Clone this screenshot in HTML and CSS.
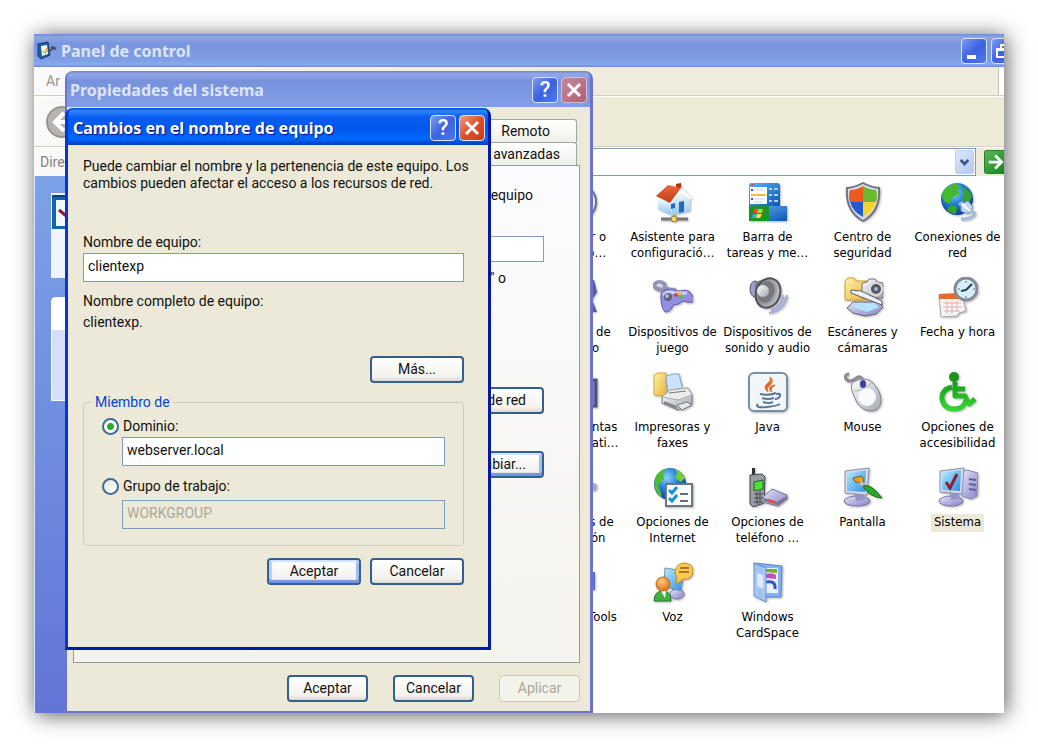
FILE: index.html
```html
<!DOCTYPE html>
<html lang="es">
<head>
<meta charset="utf-8">
<title>Panel de control</title>
<link rel="stylesheet" href="styles.css">
</head>
<body>
<svg class="defs" width="0" height="0" aria-hidden="true">
  <defs>
    <linearGradient id="screenBlue" x1="0" y1="0" x2="1" y2="1"><stop offset="0" stop-color="#b9ecff"/><stop offset="1" stop-color="#2e8fe6"/></linearGradient>
    <linearGradient id="barBlue" x1="0" y1="0" x2="1" y2="1"><stop offset="0" stop-color="#5db1f2"/><stop offset="1" stop-color="#0b56b4"/></linearGradient>
    <linearGradient id="roof" x1="0" y1="0" x2="0" y2="1"><stop offset="0" stop-color="#ea6a3c"/><stop offset="1" stop-color="#c33a14"/></linearGradient>
    <linearGradient id="wall" x1="0" y1="0" x2="0" y2="1"><stop offset="0" stop-color="#ffffff"/><stop offset="1" stop-color="#8fc8f0"/></linearGradient>
    <linearGradient id="folder" x1="0" y1="0" x2="1" y2="1"><stop offset="0" stop-color="#fff1a6"/><stop offset="1" stop-color="#e9b440"/></linearGradient>
    <linearGradient id="grey" x1="0" y1="0" x2="1" y2="1"><stop offset="0" stop-color="#ffffff"/><stop offset="1" stop-color="#a4a6b0"/></linearGradient>
    <linearGradient id="lilac" x1="0" y1="0" x2="1" y2="1"><stop offset="0" stop-color="#e4e2fb"/><stop offset="1" stop-color="#8583c4"/></linearGradient>
    <linearGradient id="green" x1="0" y1="0" x2="0" y2="1"><stop offset="0" stop-color="#159a1c"/><stop offset="1" stop-color="#35d52f"/></linearGradient>
    <radialGradient id="globe" cx=".4" cy=".3" r=".7"><stop offset="0" stop-color="#8fd4ff"/><stop offset=".5" stop-color="#237fd4"/><stop offset="1" stop-color="#093f96"/></radialGradient>
    <radialGradient id="cone" cx=".35" cy=".5" r=".7"><stop offset="0" stop-color="#f4f4f4"/><stop offset=".5" stop-color="#8b8b90"/><stop offset="1" stop-color="#d8d8da"/></radialGradient>
    <radialGradient id="face" cx=".4" cy=".3" r=".7"><stop offset="0" stop-color="#ffc983"/><stop offset="1" stop-color="#df7410"/></radialGradient>
  </defs>
</svg>
<main class="screen">
  <section class="explorer" aria-label="Panel de control">
    <header class="titlebar explorer-title">
      <svg class="title-icon" viewBox="0 0 20 20"><path d="M1 3L11 1L13 14L4 18L1 15z" fill="#1c5fa8" stroke="#123a6b"/><path d="M4 5L10 4L11 13L5 15z" fill="#eef8ff"/><path d="M6 10L8 12L10 7" fill="none" stroke="#e6a523" stroke-width="1.500"/><path d="M11 11L18 6M14 6L19 8" stroke="#474d61" stroke-width="2"/></svg>
      <h1>Panel de control</h1>
      <button class="caption blue" aria-label="Minimizar"><svg viewBox="0 0 24 24"><path d="M5 16h9v4H5z" fill="#fff"/></svg></button>
      <button class="caption blue restore" aria-label="Restaurar"><svg viewBox="0 0 24 24"><path d="M9 9V6h10v8h-4M5 10h10v8H5zM5 11h10" fill="none" stroke="#fff" stroke-width="2"/></svg></button>
    </header>
    <nav class="menubar"><a href="#archivo" aria-label="Archivo">Ar</a><span class="throbber"></span></nav>
    <div class="toolbar"><button class="back" aria-label="Atrás"><svg viewBox="0 0 34 34"><circle cx="17" cy="17" r="15" fill="#b5b4ae" stroke="#969590" stroke-width="2"/><path d="M19 8L10 17l9 9M10 17h17" fill="none" stroke="#fff" stroke-width="4"/></svg></button></div>
    <div class="address">
      <label for="dir">Dire</label>
      <div class="combo"><input id="dir" type="text"><button aria-label="Desplegar"><svg viewBox="0 0 18 22"><path d="M5 9l4 4 4-4" fill="none" stroke="#41557e" stroke-width="3"/></svg></button></div>
      <button class="go" aria-label="Ir"><svg viewBox="0 0 24 24"><path d="M3 12h14M10 5l7 7-7 7" fill="none" stroke="#fff" stroke-width="3"/></svg></button>
    </div>
    <div class="content">
      <aside class="sidebar">
        <div class="panel first"><svg viewBox="0 0 36 36"><path d="M1 2h34v33H1z" fill="#1466a8"/><path d="M1 2h34v33" fill="none" stroke="#0e3f78" stroke-width="2"/><path d="M5 6h30v26H5z" fill="#f1f8ff"/><path d="M8 16l6 5 8-12" fill="none" stroke="#8b1a2a" stroke-width="3"/></svg></div>
        <div class="panel second"></div>
      </aside>
      <ul class="icons">
        <li><svg viewBox="0 0 40 40"><circle cx="20" cy="20" r="18" fill="#ededf5" stroke="#6c6b8c" stroke-width="2"/></svg><span>Agregar o<br>quitar p…</span></li>
        <li><svg viewBox="0 0 40 40"><path d="M8 37h27" stroke="#77777a" stroke-width="3"/><path d="M21 31v5" stroke="#c9b04a" stroke-width="3"/><circle cx="21" cy="37" r="3" fill="#f1d565" stroke="#96803a"/><path d="M23 2l5-1v8h-5z" fill="#b63214"/><path d="M5 15v12l13 6V18z" fill="url(#wall)"/><path d="M18 18L28 7l9 9v13l-19 4z" fill="#dcecfa"/><path d="M28 8l9 9v12l-19 4 2-12z" fill="url(#wall)"/><path d="M17 21L28 7l10 10" fill="none" stroke="#fff" stroke-width="2"/><path d="M3 14L15 3l13 3-11 15z" fill="url(#roof)"/><path d="M18 22l4-1v5l-4 1zM26 20l5-1v11l-5 1z" fill="#2368c2"/></svg><span>Asistente para<br>configuració…</span></li>
        <li><svg viewBox="0 0 40 40"><path d="M1 3q0-2 2-2h26q3 0 3 3v20H1z" fill="url(#barBlue)"/><path d="M2 5h17v17H2z" fill="#fff"/><path d="M3 13h15" stroke="#f1be48" stroke-width="2"/><path d="M6 8h10M6 17h11M6 20h9" stroke="#c3d3e6"/><path d="M3 8h2M3 17h2" stroke="#3c53cd" stroke-width="2"/><path d="M3 3h3" stroke="#e45031" stroke-width="2"/><path d="M21 7h3M21 13h3M21 19h3M26 7h4M26 13h4M26 19h4" stroke="#a6d5fa" stroke-width="2"/><path d="M1 24h38v15H1z" fill="url(#barBlue)"/><path d="M1 24h20v15H1z" fill="#1d942b"/><path d="M6 27l4-1-1 5H5z" fill="#f04a25"/><path d="M10 27h5l-1 4h-5z" fill="#94df3b"/><path d="M5 32h4l-1 4H4z" fill="#38a6f7"/><path d="M9 32h5l-2 4H8z" fill="#ffe140"/></svg><span>Barra de<br>tareas y me…</span></li>
        <li><svg viewBox="0 0 40 40"><path d="M20 1q7 4 16 5 2 23-16 33Q2 29 4 6q9-1 16-5z" fill="#d8dce3" stroke="#6d747f" stroke-width="2"/><path d="M20 4v16H7Q5 14 7 8q7 0 13-4z" fill="#ed5a20"/><path d="M20 4q6 4 13 4 2 6 0 12H20z" fill="#67ba2b"/><path d="M7 20h13v15Q10 30 7 20z" fill="#215bd4"/><path d="M20 20h13Q30 30 20 35z" fill="#fad229"/></svg><span>Centro de<br>seguridad</span></li>
        <li><svg viewBox="0 0 40 40"><circle cx="19" cy="17" r="16" fill="url(#globe)"/><path d="M5 10q5-8 12-8l6 2-3 5 2 3-7 3-3 7-5-2-4-7z" fill="#45b92f"/><path d="M25 5q8 4 9 10l-4 6-6-3 2-6zM12 23l7 2-1 7q-6-1-9-4z" fill="#37a42b"/><path d="M23 22l7-3 5 6-5 7-7-3z" fill="#c2d8ee" stroke="#7a9abf"/><path d="M25 20l-4 3M29 29q9 0 7 4-3 4-13 4" fill="none" stroke="#a4bdd8" stroke-width="3"/><path d="M24 22l8 7" stroke="#fff" stroke-width="2"/></svg><span>Conexiones de<br>red</span></li>

        <li><svg viewBox="0 0 40 40"><path d="M22 3h14l3 12-5 8 5 12H20z" fill="#5b5b9c"/></svg><span>Cuentas de<br>usuario</span></li>
        <li><svg viewBox="0 0 40 40"><path d="M11 12q-6 2-9-2-1-5 5-5 6 1 5 6 3 2 11 2" fill="none" stroke="#9492b5" stroke-width="4"/><path d="M4 9q2-3 5 0" stroke="#e1e0f3" stroke-width="2" fill="none"/><path d="M8 16q4-5 11-3l8 1q9-3 12 4 3 6 1 7-6 1-10-1-4 4-10 4-2 7-8 7-5-6-4-19z" fill="#938ee0" stroke="#625daf"/><path d="M10 18q6-5 12-2l12 0" stroke="#d1cffb" stroke-width="3" fill="none"/><circle cx="15" cy="20" r="4" fill="#5e5f83"/><circle cx="14" cy="19" r="2" fill="#b7b8c9"/><circle cx="23" cy="18" r="2" fill="#da4239"/><circle cx="27" cy="16" r="2" fill="#e9c635"/><circle cx="28" cy="20" r="2" fill="#55be43"/></svg><span>Dispositivos de<br>juego</span></li>
        <li><svg viewBox="0 0 40 40"><path d="M28 30q6-4 7-12M23 33q10-3 13-13M21 36q16-3 18-18" fill="none" stroke="#a9a9dc" stroke-width="2"/><ellipse cx="7" cy="12" rx="5" ry="8" fill="#a19fc8" stroke="#5b5973"/><path d="M7 5L20 1l-5 29-8-11z" fill="#7e7e85"/><ellipse cx="20" cy="16" rx="12" ry="15" transform="rotate(20 20 16)" fill="url(#cone)" stroke="#515157" stroke-width="2"/><ellipse cx="18" cy="15" rx="8" ry="11" transform="rotate(20 18 15)" fill="#77777c"/><circle cx="15" cy="14" r="6" fill="url(#grey)"/></svg><span>Dispositivos de<br>sonido y audio</span></li>
        <li><svg viewBox="0 0 40 40"><path d="M2 4l3-3h6l2 3h12v19H2z" fill="url(#folder)" stroke="#cf9f35"/><path d="M19 6l5-1 2-3h6l2 3 6 1v15H19z" fill="url(#grey)" stroke="#777"/><circle cx="33" cy="12" r="6" fill="#53565e" stroke="#d9d9df" stroke-width="2"/><circle cx="33" cy="12" r="2" fill="#9bbbd9"/><path d="M4 31l6-6h25l5 5-7 7-11 2-12-3z" fill="url(#lilac)" stroke="#666"/><path d="M10 30l5-4h16l5 4-12 5z" fill="#b6e4ff"/><path d="M8 13l10 1 21 10v4L8 16z" fill="#eef0f6" stroke="#5b5e6c"/></svg><span>Escáneres y<br>cámaras</span></li>
        <li><svg viewBox="0 0 40 40"><path d="M1 18h23l4 16-7 2-2 3-16 1z" fill="#f6f4f4" stroke="#a5a4a7"/><path d="M1 17l18-1 1 6H1z" fill="#ea692d"/><path d="M5 26h18M5 30h19M6 34h16M9 24v13M14 24v13M19 24v11" stroke="#dcb3b9"/><circle cx="28" cy="12" r="11" fill="#d6f0fb" stroke="#868b94" stroke-width="3"/><path d="M28 13l6-6M28 13l-5 1" stroke="#263f4e" stroke-width="2"/><path d="M28 4v2M28 19v2M20 12h2M35 12h2" stroke="#546b7a"/></svg><span>Fecha y hora</span></li>

        <li><svg viewBox="0 0 40 40"><path d="M8 8h30v26H8z" fill="#7b78c4" stroke="#55546f" stroke-width="3"/></svg><span>Herramientas<br>administrati…</span></li>
        <li><svg viewBox="0 0 40 40"><path d="M1 3l4-2h8v23l-12-1z" fill="url(#folder)" stroke="#d7aa3e"/><path d="M13 4q7-3 13-2l4 17-15 3z" fill="#cce4fb" stroke="#7ca4d3"/><path d="M9 25l8-7 18-2 4 7v9l-14 6-16-7z" fill="url(#grey)" stroke="#777"/><path d="M9 25l8-7 18-2 4 7-14 5z" fill="#ececee" stroke="#aaa"/><path d="M11 29l13 5v3l-13-5z" fill="#85878d"/><path d="M24 33l10-3 5 3-10 5z" fill="#e6e8ee" stroke="#777"/><path d="M16 21l17-2" stroke="#777"/></svg><span>Impresoras y<br>faxes</span></li>
        <li><svg viewBox="0 0 40 40"><rect x="1" y="1" width="38" height="38" rx="5" fill="#f2f6f9" stroke="#7890a7" stroke-width="2"/><path d="M20 20q-6-5 0-9 4-3 2-6 5 4-1 9-3 2-1 6M23 20q-1-4 4-7-7 1-5 5z" fill="#e46c28" stroke="#e46c28"/><path d="M12 22q8 2 16-1M14 26q6 2 12 0M15 30q6 2 10 0M28 22q5-1 4 2-1 3-5 3M10 32q-4 4 9 3 10-1 13-3" fill="none" stroke="#587896" stroke-width="2"/></svg><span>Java</span></li>
        <li><svg viewBox="0 0 40 40"><path d="M22 12Q18 1 12 7q-6 4-9 0Q1 2 6 2" fill="none" stroke="#8a8a91" stroke-width="3"/><path d="M9 19q-3-9 6-11 10-3 15 3 8 8 8 18-1 10-10 10-8 0-14-8z" fill="url(#grey)" stroke="#85858c"/><path d="M11 19q10 0 18-9" fill="none" stroke="#b5b5bc"/><ellipse cx="24" cy="25" rx="9" ry="9" fill="#fafafa"/><ellipse cx="20" cy="12" rx="3" ry="4" fill="#3d3e9e"/></svg><span>Mouse</span></li>
        <li><svg viewBox="0 0 40 40"><circle cx="16" cy="5" r="5" fill="#18951e"/><path d="M17 10v14h10l4 8 6-5M18 17h9M14 15Q3 18 4 27q2 10 12 10 10 0 12-9" fill="none" stroke="url(#green)" stroke-width="5" stroke-linejoin="round"/></svg><span>Opciones de<br>accesibilidad</span></li>

        <li><svg viewBox="0 0 40 40"><circle cx="35" cy="20" r="4" fill="#aaaab4"/></svg><span>Opciones de<br>ubicación</span></li>
        <li><svg viewBox="0 0 40 40"><circle cx="17" cy="17" r="16" fill="url(#globe)"/><path d="M3 9q4-6 9-7l-2 6 1 4-6 6 3 8 1 5Q-2 22 3 9z" fill="#4fbd31"/><path d="M22 2q8 3 10 9l-4 4-6-4 2-5z" fill="#72cc3e"/><path d="M13 17h26v22H13z" fill="#fafcff" stroke="#70757d" stroke-width="2"/><path d="M16 23l3 3 5-6M16 31l3 3 5-6" fill="none" stroke="#1592c9" stroke-width="3"/><path d="M27 27h8M27 34h8" stroke="#696c76" stroke-width="2"/></svg><span>Opciones de<br>Internet</span></li>
        <li><svg viewBox="0 0 40 40"><path d="M4 1h3v9H4z" fill="#303239"/><path d="M2 8l12-1 3 3-1 26-11 4-3-3z" fill="#9a9da4" stroke="#42454c"/><path d="M6 15l9-2v9l-9 2z" fill="#4be331" stroke="#295a26"/><path d="M6 27h9M6 31h9M6 35h8M9 25v12M12 24v12" stroke="#44474f"/><path d="M15 30l9-8 15 6v4l-9 7-15-4z" fill="url(#lilac)" stroke="#77778c"/><path d="M16 31l13 4 10-6v3l-9 6-14-4z" fill="#77759a"/><path d="M20 33l7 2" stroke="#ee4732" stroke-width="2"/></svg><span>Opciones de<br>teléfono …</span></li>
        <li><svg viewBox="0 0 40 40"><ellipse cx="14" cy="34" rx="13" ry="5" fill="url(#lilac)" stroke="#7774a4"/><path d="M11 25h9l2 8-9 1z" fill="#9593c7"/><path d="M2 4l24-3-2 27-22-2z" fill="#d6dcee" stroke="#8a90ab"/><path d="M4 6l19-3-1 22-18-1z" fill="url(#screenBlue)"/><path d="M10 11l8-2 3 3-1 4-8-1z" fill="#dca034" stroke="#7c5817"/><path d="M17 15l6 5" stroke="#c8b8a1" stroke-width="4"/><path d="M20 19q8-3 19 12-13-1-19-12z" fill="#29a92b" stroke="#176b1b"/></svg><span>Pantalla</span></li>
        <li class="selected"><svg viewBox="0 0 40 40"><path d="M24 5l5-2 11 3-1 23-6 3-9-3z" fill="url(#lilac)" stroke="#8b8abb"/><path d="M31 12l7 1M31 17l7 1M31 22l7 1" stroke="#64629e" stroke-width="2"/><ellipse cx="13" cy="34" rx="12" ry="5" fill="url(#lilac)" stroke="#7774a4"/><path d="M11 24h9l2 8-9 1z" fill="#9593c7"/><path d="M2 4l24-3-2 26-22-2z" fill="#d6dcee" stroke="#8a90ab"/><path d="M4 6l19-3-1 21-18-1z" fill="url(#screenBlue)"/><path d="M8 15l4 6 7-14" fill="none" stroke="#8c2030" stroke-width="3"/></svg><span>Sistema</span></li>

        <li><svg viewBox="0 0 40 40"><path d="M10 10h27v18H10z" fill="#5972b9"/></svg><span>VMware Tools</span></li>
        <li><svg viewBox="0 0 40 40"><path d="M19 27h7l3 4-8 2z" fill="#77759a"/><ellipse cx="24" cy="32" rx="7" ry="5" fill="url(#lilac)" stroke="#7774a4"/><path d="M12 6l19 3-3 20-17-5z" fill="url(#screenBlue)" stroke="#7c92ad"/><path d="M22 9q2-8 10-8 8 1 8 8-1 9-9 8l-8 5 1-7q-2-2-2-6z" fill="#fcc84f" stroke="#c98b26"/><path d="M27 6h9M26 10h10" stroke="#a8772a" stroke-width="2"/><path d="M1 39q0-10 9-10 8 0 8 10z" fill="#3fb242" stroke="#26792b"/><path d="M8 29h5l-1 7z" fill="#fff"/><circle cx="10" cy="22" r="7" fill="url(#face)" stroke="#bd6814"/></svg><span>Voz</span></li>
        <li><svg viewBox="0 0 40 40"><path d="M6 1l28 3-1 31H12z" fill="#86b0ee" stroke="#5a85ce"/><path d="M15 6h15v25H15z" fill="#e9f3ff"/><path d="M16 7h13v4l-11-1z" fill="#71af2e"/><path d="M17 12q8-2 11 1v4l-10-1z" fill="#c74ac8"/><path d="M18 20q10-2 9 7" fill="none" stroke="#3055cf" stroke-width="3"/><path d="M6 1l12 5v34L6 34z" fill="#a7c5f5" fill-opacity=".9" stroke="#6b91d3"/><path d="M9 11l6 2v14l-6-3z" fill="#dce9ff"/></svg><span>Windows<br>CardSpace</span></li>
      </ul>
    </div>
  </section>

  <section class="window system" role="dialog" aria-label="Propiedades del sistema">
    <header class="titlebar">
      <h2>Propiedades del sistema</h2>
      <button class="caption blue" aria-label="Ayuda">?</button>
      <button class="caption dim" aria-label="Cerrar"><svg viewBox="0 0 24 24"><path d="M6 6l12 12M18 6L6 18" stroke="#fff" stroke-width="3"/></svg></button>
    </header>
    <div class="window-body">
      <div class="tabs"><button>Remoto</button><button>Opciones avanzadas</button></div>
      <div class="sheet">
        <p class="info">para identificar su equipo</p>
        <input type="text" aria-label="Descripción del equipo">
        <p class="example">"Equipo de la cocina" o</p>
        <button class="btn">Id. de red</button>
        <button class="btn default">Cambiar...</button>
      </div>
      <div class="actions"><button class="btn">Aceptar</button><button class="btn">Cancelar</button><button class="btn" disabled>Aplicar</button></div>
    </div>
  </section>

  <section class="window rename" role="dialog" aria-label="Cambios en el nombre de equipo">
    <header class="titlebar">
      <h2>Cambios en el nombre de equipo</h2>
      <button class="caption blue" aria-label="Ayuda">?</button>
      <button class="caption close" aria-label="Cerrar"><svg viewBox="0 0 24 24"><path d="M6 6l12 12M18 6L6 18" stroke="#fff" stroke-width="3"/></svg></button>
    </header>
    <form class="window-body">
      <p class="intro">Puede cambiar el nombre y la pertenencia de este equipo. Los<br>cambios pueden afectar el acceso a los recursos de red.</p>
      <label class="field-label" for="nombre">Nombre de equipo:</label>
      <input id="nombre" type="text" value="clientexp">
      <p class="full">Nombre completo de equipo:<br>clientexp.</p>
      <button class="btn more" type="button">Más...</button>
      <fieldset>
        <legend>Miembro de</legend>
        <label class="radio"><input type="radio" name="miembro" checked>Dominio:</label>
        <input type="text" value="webserver.local" aria-label="Dominio">
        <label class="radio"><input type="radio" name="miembro">Grupo de trabajo:</label>
        <input type="text" value="WORKGROUP" aria-label="Grupo de trabajo" disabled>
      </fieldset>
      <div class="actions"><button class="btn default" type="button">Aceptar</button><button class="btn" type="button">Cancelar</button></div>
    </form>
  </section>
</main>
</body>
</html>
```
FILE: styles.css
```css
* { box-sizing: border-box; }

body {
  margin: 0;
  padding: 34px;
  background: #fff;
  color: #111;
  font: 14px/17px Roboto, "Liberation Sans", Arial, sans-serif;
}

h1, h2, p, ul { margin: 0; padding: 0; }
button, input { font: inherit; color: inherit; }
button { padding: 0; }
.defs { position: absolute; }

.screen {
  position: relative;
  display: flex;
  min-height: calc(100vh - 68px);
  box-shadow: 2px 2px 20px rgba(0, 0, 0, .65);
}

/* Explorer window */
.explorer {
  flex: 1;
  display: flex;
  flex-direction: column;
  min-width: 0;
  overflow: hidden;
  background: #efecdd;
}

.titlebar {
  display: flex;
  align-items: center;
  gap: 3px;
  color: #dce5fb;
  font-family: "Noto Sans", sans-serif;
}

.titlebar h1, .titlebar h2 {
  flex: 1;
  font-size: 16px;
  line-height: 20px;
  font-weight: 700;
  white-space: nowrap;
}

.explorer-title {
  height: 33px;
  padding-left: 3px;
  gap: 4px;
  background: linear-gradient(#6f8bd9 0, #8ba5e6 10%, #7a95de 30%, #7f9fe6 80%, #88aaee 92%, #6f8ad4);
}

.title-icon { width: 20px; height: 20px; }

.caption {
  width: 26px;
  height: 26px;
  border: 1px solid #dbe4ff;
  border-radius: 4px;
  color: #fff;
  font: 500 22px/22px Roboto, "Liberation Sans", sans-serif;
}

.caption svg { display: block; width: 24px; height: 24px; }
.caption.blue { background: linear-gradient(135deg, #7d9bf3, #3c62df 50%, #4d79ee); }
.caption.dim { background: linear-gradient(135deg, #c58a9b, #ad5f72); border-color: #d5c0dc; }
.caption.close { background: linear-gradient(135deg, #f09b80, #e0502b 50%, #c93c14); }
.restore { margin-right: -13px; }

.menubar {
  display: flex;
  justify-content: space-between;
  height: 29px;
  padding-left: 12px;
  border-bottom: 1px solid #d5d1c0;
  background: linear-gradient(90deg, #fafafa, #efecde 55%);
}

.menubar a { color: #969590; line-height: 28px; text-decoration: none; }
.throbber { width: 6px; border-left: 1px solid #c5c1b0; background: #fff; }

.toolbar {
  height: 51px;
  padding: 8px 11px;
  border-top: 1px solid #fff;
  border-bottom: 1px solid #d5d1c0;
  background: linear-gradient(90deg, #f9f9f7, #eeead8 60%);
}

.back { width: 34px; height: 34px; border: 0; background: none; }
.back svg { display: block; }

.address {
  display: flex;
  align-items: center;
  height: 29px;
  gap: 8px;
  padding-left: 6px;
  border-top: 1px solid #fff;
  background: linear-gradient(90deg, #f9f9f7, #eeead8 60%);
  color: #85847e;
}

.combo {
  flex: 1;
  display: flex;
  height: 28px;
  padding: 1px;
  border: 1px solid #7f9db9;
  background: #fff;
}

.combo input { flex: 1; min-width: 0; border: 0; background: none; }
.combo button { width: 19px; border: 1px solid #c0cff6; border-radius: 2px; background: linear-gradient(135deg, #dce6fe, #b4c8f5); }
.combo svg { display: block; width: 17px; height: 22px; }
.go { width: 20px; height: 24px; overflow: hidden; border: 1px solid #23852b; border-right: 0; border-radius: 3px 0 0 3px; background: linear-gradient(135deg, #60b85b, #12851a); }
.go svg { display: block; width: 24px; height: 22px; }

.content {
  flex: 1;
  display: flex;
  background: #fff;
}

.sidebar {
  width: 228px;
  padding: 17px 16px 0;
  border-left: 1px solid #dce6fb;
  background: linear-gradient(#7ba2e7, #6375d6);
}

.panel { background: #f0f4ff; border: 1px solid #fff; }
.panel.first { height: 85px; margin-bottom: 19px; border: 0; }
.panel.first svg { display: block; width: 36px; height: 38px; }
.panel.second { height: 104px; border-radius: 4px 4px 0 0; background: linear-gradient(#fff 32px, #d6dff7 32px); }

.icons {
  flex: 1;
  display: grid;
  grid-template-columns: repeat(5, 95px);
  grid-auto-rows: 95px;
  justify-content: end;
  align-content: start;
  margin-right: -1px;
  padding-top: 6px;
  list-style: none;
  color: #000;
  font: 13px/16px "DejaVu Sans Condensed", "DejaVu Sans", sans-serif;
  text-align: center;
  white-space: nowrap;
}

.icons li { display: flex; flex-direction: column; align-items: center; gap: 7px; }
.icons svg { width: 40px; height: 40px; flex: none; filter: drop-shadow(1px 1px 1px rgba(0, 0, 0, .3)); }
.icons .selected span { padding: 0 3px 2px; background: #ece9d8; }

/* Dialog windows */
.window {
  position: absolute;
  display: flex;
  flex-direction: column;
  border-radius: 8px 8px 0 0;
}

.window .titlebar { height: 36px; padding: 2px 3px 0 5px; flex: none; }
.window-body { flex: 1; display: flex; flex-direction: column; background: #ece9d8; }

.system {
  top: 37px;
  bottom: 0;
  left: 31px;
  width: 528px;
  border: solid #6c72cf;
  border-width: 0 3px 2px 2px;
  background: linear-gradient(#6c80d0 0, #93a9e8 3px, #7891dc 10px, #7f9de5 30px, #7f9de5 36px, #6c72cf 36px);
}

.system .titlebar { padding-left: 3px; }
.system .window-body { padding: 12px 10px 9px 6px; }

.tabs { display: flex; flex-direction: column; align-items: flex-end; padding-right: 3px; }
.tabs button {
  width: 150px;
  height: 23px;
  border: 1px solid #9aa6a8;
  border-bottom: 0;
  border-radius: 3px 3px 0 0;
  background: linear-gradient(#fff, #f0f0ea);
  text-align: right;
  padding-right: 16px;
}
.tabs button:first-child { padding-right: 26px; }

.sheet {
  flex: 1;
  display: flex;
  flex-direction: column;
  align-items: flex-end;
  padding: 21px 35px 0;
  border: 1px solid #919b9c;
  background: linear-gradient(#fcfcfe, #f4f3ee);
}

.sheet .info { padding-right: 11px; margin-bottom: 32px; }
.sheet input { width: 300px; height: 26px; margin-bottom: 8px; }
.sheet .example { padding-right: 38px; margin-bottom: 100px; }
.sheet .btn { width: 110px; padding-right: 16px; text-align: right; margin-bottom: 37px; }

input[type="text"] { padding: 0 4px; border: 1px solid #7f9db9; background: #fff; }
.combo input[type="text"] { border: 0; }

.btn {
  width: 94px;
  height: 27px;
  border: 2px solid #33608f;
  border-radius: 4px;
  background: linear-gradient(#fff, #f3f2ed 80%, #dcd8ce);
}
.btn.default { box-shadow: inset 0 2px 1px #cfe2ff, inset 0 -3px 1px #7195e4, inset 3px 0 1px #b6cdf6, inset -3px 0 1px #a0bcf1; }
.btn:disabled { border: 1px solid #cbc8b9; background: #f4f3ea; color: #aaa89a; }

.actions { display: flex; justify-content: flex-end; }
.system .actions { gap: 25px; padding-top: 12px; }
.system .actions .btn { width: 81px; }

.rename {
  top: 74px;
  left: 31px;
  width: 426px;
  height: 542px;
  border: solid #0a35d2;
  border-width: 0 3px 3px;
  border-right-color: #0019a8;
  border-bottom-color: #0019a8;
  background: linear-gradient(#0048cf 0, #2f86ff 3px, #0a5cf0 9px, #0058ee 20px, #0068ff 31px, #0043c8 36px);
}

.rename .titlebar { color: #fff; text-shadow: 1px 1px 1px #0f1089; height: 37px; }
.rename .window-body { padding: 13px 24px 0 15px; }
.rename .intro { margin-bottom: 42px; white-space: nowrap; }
.rename .field-label { margin-bottom: 2px; }
.rename .window-body > input { height: 29px; padding-bottom: 4px; }
.rename .full { margin-top: 9px; line-height: 21px; }
.rename .more { align-self: flex-end; margin-top: 23px; margin-bottom: 11px; }

fieldset {
  display: flex;
  flex-direction: column;
  min-width: 0;
  margin: 0 0 12px;
  padding: 5px 18px 16px;
  border: 1px solid #cfccba;
  border-radius: 4px;
}

legend { margin-left: -10px; padding: 0 3px; color: #0046d5; line-height: 17px; }
fieldset input[type="text"] { height: 29px; margin-left: 20px; padding-bottom: 4px; }
.radio { display: flex; align-items: center; gap: 4px; height: 21px; }
fieldset input + .radio { margin-top: 10px; margin-bottom: 3px; }

input[type="radio"] {
  appearance: none;
  width: 17px;
  height: 17px;
  margin: 0;
  border: 2px solid #3f6a96;
  border-radius: 50%;
  background: linear-gradient(135deg, #e6e6df, #fff);
}
input[type="radio"]:checked { background: radial-gradient(circle, #2fab2b 3px, #fff 4px); }
input[type="text"]:disabled { background: #ece9d8; color: #aca899; }
.rename .actions { gap: 9px; }
```
